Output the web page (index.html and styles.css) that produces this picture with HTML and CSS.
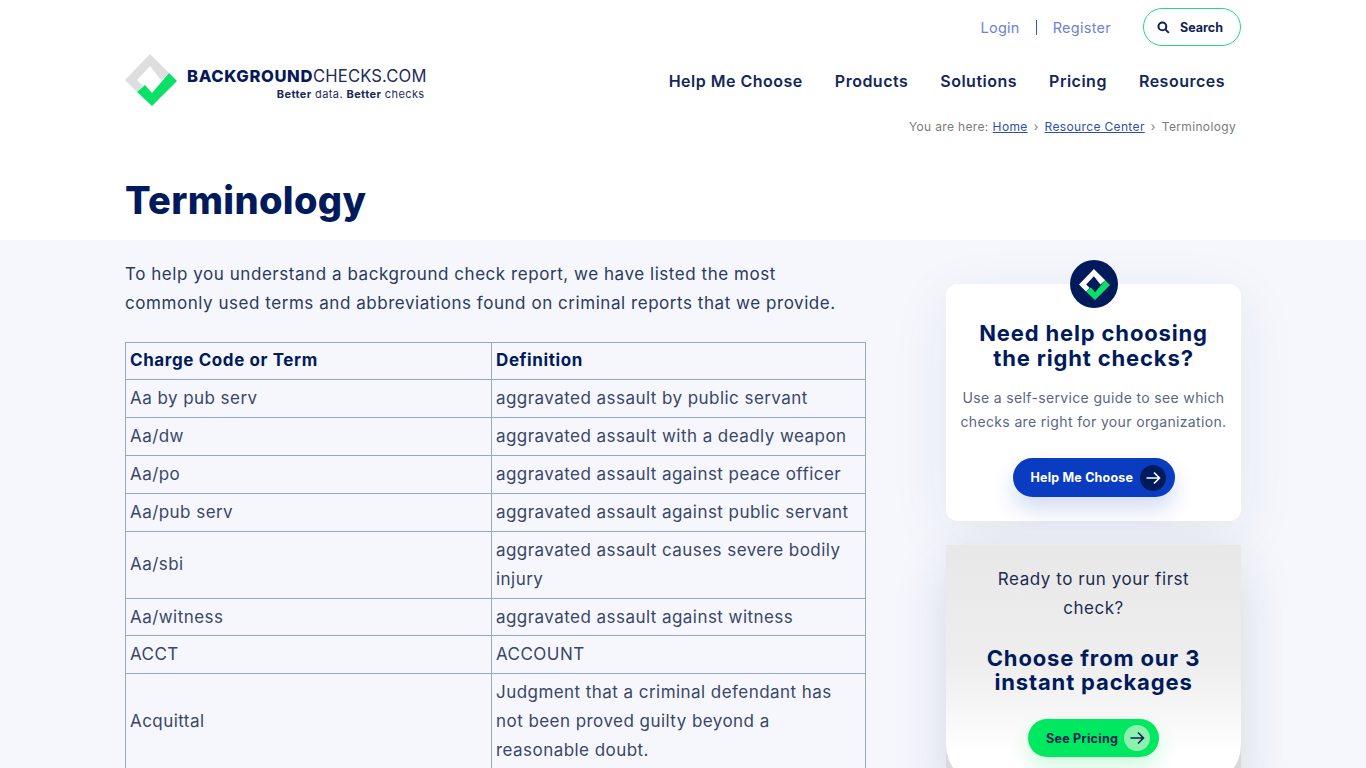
FILE: index.html
```html
<!DOCTYPE html>
<html lang="en">
<head>
<meta charset="utf-8">
<title>Terminology</title>
<link rel="stylesheet" href="styles.css">
</head>
<body>
<header class="header">
  <div class="wrap">
    <div class="top">
      <a class="top-link">Login</a>
      <span class="top-sep"></span>
      <a class="top-link">Register</a>
      <a class="search">
        <svg class="search-icon" viewBox="0 0 14 14"><circle cx="5.8" cy="5.8" r="4.2"/><path d="M9 9l3.8 3.8"/></svg>
        <span>Search</span>
      </a>
    </div>
    <div class="brand-row">
      <div class="brand">
        <svg class="brand-mark" viewBox="0 0 52 52"><polygon class="mark-grey" points="25,0 44,19 36,26 25,12 12,26 18,32 12,38 0,26"/><polygon class="mark-green" points="20,31 27,39 44,19 52,27 27,52 12,38"/></svg>
        <div class="brand-text">
          <div class="brand-name"><b>BACKGROUND</b>CHECKS.COM</div>
          <div class="brand-tag"><b>Better</b> data. <b>Better</b> checks</div>
        </div>
      </div>
      <nav class="nav">
        <a>Help Me Choose</a>
        <a>Products</a>
        <a>Solutions</a>
        <a>Pricing</a>
        <a>Resources</a>
      </nav>
    </div>
    <div class="crumbs">
      <span>You are here:</span>
      <a>Home</a>
      <i>›</i>
      <a>Resource Center</a>
      <i>›</i>
      <span>Terminology</span>
    </div>
    <h1 class="title">Terminology</h1>
  </div>
</header>
<main class="main">
  <div class="wrap columns">
    <section class="content">
      <p class="intro">To help you understand a background check report, we have listed the most commonly used terms and abbreviations found on criminal reports that we provide.</p>
      <table class="terms">
        <tr><th>Charge Code or Term</th><th>Definition</th></tr>
        <tr><td>Aa by pub serv</td><td>aggravated assault by public servant</td></tr>
        <tr><td>Aa/dw</td><td>aggravated assault with a deadly weapon</td></tr>
        <tr><td>Aa/po</td><td>aggravated assault against peace officer</td></tr>
        <tr><td>Aa/pub serv</td><td>aggravated assault against public servant</td></tr>
        <tr><td>Aa/sbi</td><td>aggravated assault causes severe bodily injury</td></tr>
        <tr class="tight"><td>Aa/witness</td><td>aggravated assault against witness</td></tr>
        <tr><td>ACCT</td><td>ACCOUNT</td></tr>
        <tr><td>Acquittal</td><td>Judgment that a criminal defendant has not been proved guilty beyond a reasonable doubt.</td></tr>
      </table>
    </section>
    <aside class="side">
      <div class="card help">
        <div class="badge">
          <svg viewBox="0 0 52 52"><polygon class="mark-white" points="25,0 44,19 36,26 25,12 12,26 18,32 12,38 0,26"/><polygon class="mark-green" points="20,31 27,39 44,19 52,27 27,52 12,38"/></svg>
        </div>
        <h2>Need help choosing the right checks?</h2>
        <p>Use a self-service guide to see which checks are right for your organization.</p>
        <a class="btn btn-blue">Help Me Choose
          <span class="btn-dot"><svg viewBox="0 0 16 16"><path d="M1.5 8h13M9 2.5L14.5 8 9 13.5"/></svg></span>
        </a>
      </div>
      <div class="under">
        <div class="card ready">
          <p>Ready to run your first check?</p>
          <h2>Choose from our 3 instant packages</h2>
          <a class="btn btn-green">See Pricing
            <span class="btn-dot"><svg viewBox="0 0 16 16"><path d="M1.5 8h13M9 2.5L14.5 8 9 13.5"/></svg></span>
          </a>
        </div>
      </div>
    </aside>
  </div>
</main>
</body>
</html>
```

FILE: styles.css
```css
* { box-sizing: border-box; }
html, body { margin: 0; padding: 0; height: 768px; overflow: hidden; }
body { font-family: Inter, "Liberation Sans", sans-serif; background: #fff; color: #2b3a60; }
a { cursor: pointer; }
.wrap { width: 1116px; margin: 0 auto; }

.header { height: 240px; background: #fff; }
.top { display: flex; align-items: center; justify-content: flex-end; padding-top: 8px; height: 46px; }
.top-link { font-size: 14.5px; letter-spacing: 0.27px; color: #6f80d8; }
.top-sep { width: 1px; height: 15px; background: #2f55c8; margin: 0 16px 0 16px; }
.search { display: flex; align-items: center; gap: 10px; width: 98px; height: 38px; margin-left: 32px; padding-left: 13px; border: 1px solid #1fdc7a; border-radius: 19px; font-size: 12.5px; font-weight: 700; color: #0f2355; }
.search-icon { width: 13px; height: 13px; fill: none; stroke: #0f2355; stroke-width: 2.2; }

.brand-row { display: flex; justify-content: space-between; align-items: center; height: 52px; margin-top: 8px; }
.brand { display: flex; align-items: center; gap: 10px; }
.brand-mark { width: 52px; height: 52px; display: block; }
.mark-grey { fill: #dedede; }
.mark-white { fill: #fff; }
.mark-green { fill: #0be066; }
.brand-text { padding-top: 8px; text-align: right; }
.brand-name { font-size: 16.6px; line-height: 20px; letter-spacing: 0.15px; color: #1a2b5c; white-space: nowrap; }
.brand-name b { font-weight: 800; color: #06195a; letter-spacing: 0.6px; }
.brand-tag { font-size: 11px; line-height: 17px; letter-spacing: 0.4px; color: #1a2b5c; padding-right: 2px; }
.brand-tag b { font-weight: 700; }
.nav { display: flex; gap: 32px; padding-top: 2px; padding-right: 16px; font-size: 16px; font-weight: 600; letter-spacing: 0.5px; color: #14275a; }

.crumbs { display: flex; justify-content: flex-end; align-items: center; gap: 4px; height: 16px; margin-top: 12px; padding-right: 5px; font-size: 12px; letter-spacing: 0.35px; color: #7b7b7b; }
.crumbs a { color: #2d50a8; text-decoration: underline; }
.crumbs i { font-style: normal; margin: 0 2px; }
.title { margin: 0; padding-top: 44px; font-size: 38px; line-height: 44px; font-weight: 800; letter-spacing: 0.35px; color: #001a5c; }

.main { height: 528px; overflow: hidden; background: #f5f7fd; }
.columns { display: flex; justify-content: space-between; align-items: flex-start; }
.content { width: 741px; padding-top: 20px; }
.intro { max-width: 725px; margin: 0 0 24px; font-size: 17px; line-height: 28.8px; color: #2b3a60; letter-spacing: 0.55px; }
.terms { width: 741px; table-layout: fixed; border-collapse: collapse; font-size: 17px; line-height: 29px; letter-spacing: 0.45px; }
.terms th, .terms td { border: 1px solid #9aa8c2; padding: 4px; text-align: left; vertical-align: middle; }
.terms th:first-child, .terms td:first-child { width: 366px; }
.terms th { padding: 3px 4px 4px; font-weight: 700; color: #001a5c; letter-spacing: 0.6px; }
.terms td { color: #3a4668; }
.terms .tight td { padding-bottom: 3px; }

.side { width: 295px; padding-top: 44px; }
.card { position: relative; text-align: center; box-shadow: 0 15px 60px rgba(30, 35, 60, 0.08); }
.help { height: 237px; padding: 37px 30px 0; background: #fff; border-radius: 12px; }
.badge { position: absolute; top: -24px; left: 124px; width: 48px; height: 48px; border-radius: 50%; background: #001a5c; display: flex; align-items: center; justify-content: center; }
.badge svg { width: 31px; height: 31px; display: block; }
.card h2 { margin: 0; font-size: 22px; line-height: 25px; font-weight: 700; color: #001a5c; letter-spacing: 0.85px; }
.help p { margin: 15px -16px 24px; font-size: 14px; line-height: 24px; letter-spacing: 0.35px; color: #5a6685; }
.btn { display: inline-flex; align-items: center; justify-content: space-between; height: 39px; border-radius: 20px; font-size: 12.5px; font-weight: 700; }
.btn-blue { width: 162px; padding: 0 9px 0 18px; background: #0a3cc2; color: #fff; letter-spacing: 0.2px; box-shadow: 0 12px 22px rgba(10, 60, 194, 0.18); }
.btn-green { width: 131px; height: 38px; padding: 0 9px 0 18px; background: #00e85f; color: #0f2355; letter-spacing: 0.27px; box-shadow: 0 10px 20px rgba(0, 232, 95, 0.2); }
.btn-dot { width: 26px; height: 26px; border-radius: 50%; display: flex; align-items: center; justify-content: center; }
.btn-blue .btn-dot { background: #001a5c; }
.btn-green .btn-dot { background: #8ef0ae; }
.btn-dot svg { width: 16px; height: 16px; fill: none; stroke-width: 1.6; }
.btn-blue .btn-dot svg { stroke: #fff; }
.btn-green .btn-dot svg { stroke: #0f2355; }

.under { margin-top: 24px; background: #d9d9d9; box-shadow: 0 20px 50px rgba(30, 35, 60, 0.14); }
.ready { height: 240px; padding: 20px 30px 0; border-radius: 0 0 40px 40px; box-shadow: none; background: linear-gradient(180deg, #e8e8e8 0%, #eeeeee 50%, #ffffff 88%); }
.ready p { margin: 0 0 23px; font-size: 17px; line-height: 28.8px; letter-spacing: 0.55px; color: #1d2b52; }
.ready h2 { margin-bottom: 25px; line-height: 24.4px; }
```
